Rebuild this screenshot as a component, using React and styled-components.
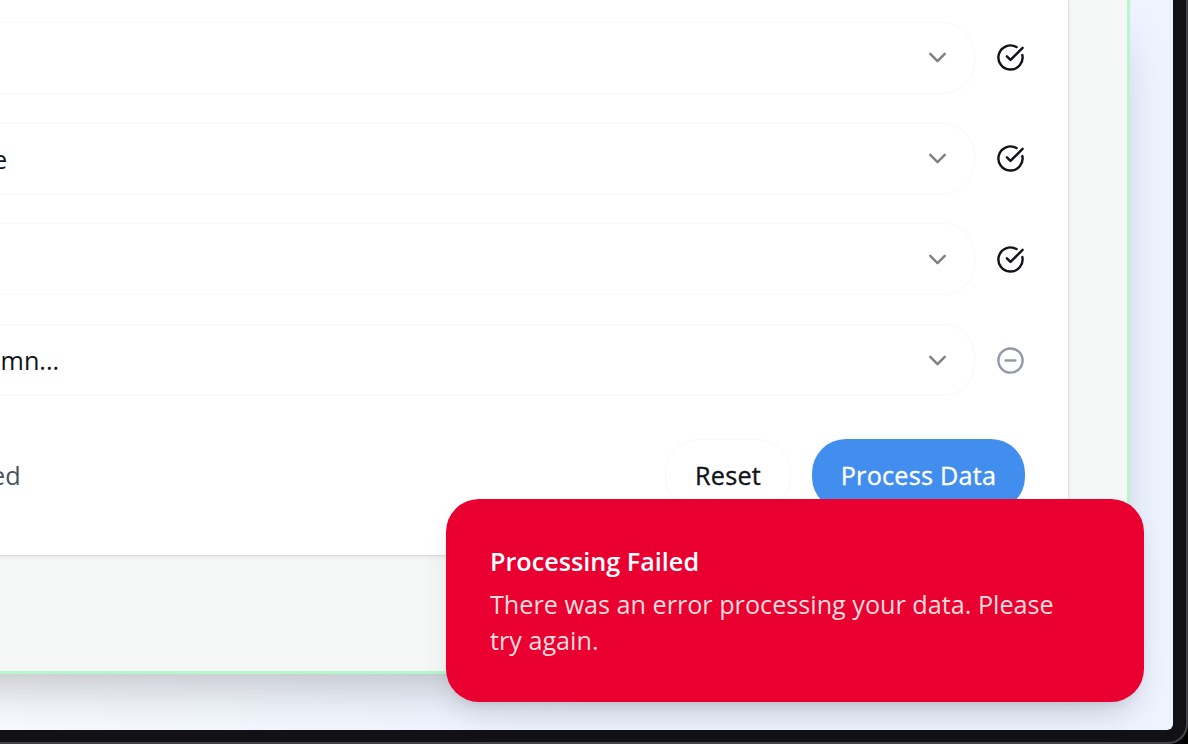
import React from 'react';
import styled, { createGlobalStyle } from 'styled-components';

const GlobalStyle = createGlobalStyle`
  * { box-sizing: border-box; }
  html, body { margin: 0; background: #000; overflow: hidden; }
  body { font-family: "Open Sans", "Noto Sans", sans-serif; font-size: 25.2px; color: #10131a; }
`;

const Viewport = styled.div`
  position: relative;
  width: 1188px;
  height: 744px;
  overflow: hidden;
  background: #000;
`;

const Device = styled.div`
  width: 1188px;
  height: 744px;
  padding: 0 13px 12px 0;
  background: #121116;
  border-right: 2px solid #444345;
  border-bottom: 2px solid #444345;
  border-bottom-right-radius: 20px;
`;

const Screen = styled.div`
  width: 1173px;
  height: 730px;
  padding: 0 43px 56px 0;
  overflow: hidden;
  background: linear-gradient(90deg, #f8fbff 0%, #edf3ff 50%);
  border-bottom-right-radius: 6px;
`;

const Panel = styled.div`
  width: 1330px;
  height: 674px;
  margin-left: -200px;
  padding: 0 59px 0 0;
  background: #f5f7f6;
  border-right: 3px solid #b6f6ca;
  border-bottom: 3px solid #b6f6ca;
  box-shadow: 0 27px 48px -17px rgba(0, 0, 0, 0.25);
`;

const Card = styled.div`
  height: 555px;
  padding: 21.7px 43px 0 200px;
  background: #fff;
  box-shadow: 0 0 0 1px rgba(0, 0, 0, 0.06), 0 2px 5px rgba(0, 0, 0, 0.07);
`;

const Fields = styled.div`
  display: flex;
  flex-direction: column;
  gap: 28.87px;
`;

const FieldRow = styled.div`
  display: flex;
  align-items: center;
  justify-content: space-between;
  height: 72px;
  padding-right: 0.5px;
`;

const Select = styled.div`
  display: flex;
  align-items: center;
  justify-content: space-between;
  width: 975px;
  height: 72px;
  padding-right: 22px;
  border: 1px solid #f7f8f8;
  border-left: 0;
  border-radius: 0 32px 32px 0;
`;

const Value = styled.span`
  margin-left: ${(p) => p.$shift}px;
  padding-top: 0.4px;
  white-space: nowrap;
`;

const Icon = styled.svg`
  width: 29px;
  height: 29px;
  flex: none;
  fill: none;
  stroke: ${(p) => p.$color};
  stroke-width: 2;
  stroke-linecap: round;
  stroke-linejoin: round;
`;

const Footer = styled.div`
  display: flex;
  align-items: center;
  height: 72px;
  margin-top: 42.7px;
`;

const Status = styled.span`
  flex: 1;
  margin-left: -9px;
  color: #4a5261;
`;

const Button = styled.button`
  height: 72px;
  width: ${(p) => p.$width}px;
  margin-left: ${(p) => (p.$primary ? 21 : 0)}px;
  padding: 1px 0 0;
  border: ${(p) => (p.$primary ? '0' : '1px solid #f7f8f8')};
  border-radius: 34px;
  background: ${(p) => (p.$primary ? '#428eee' : '#fff')};
  color: ${(p) => (p.$primary ? '#fff' : '#10131a')};
  font: 500 25.2px "Open Sans", "Noto Sans", sans-serif;
  letter-spacing: 0.25px;
  -webkit-text-stroke: 0.35px currentColor;
  white-space: nowrap;
`;

const Toast = styled.div`
  position: absolute;
  left: 446px;
  top: 499px;
  width: 698px;
  height: 203px;
  padding: 44px 44px;
  border-radius: 33px;
  background: #e90030;
  color: #fff;
  box-shadow: 0 18px 28px -5px rgba(0, 0, 0, 0.1), 0 7px 11px -7px rgba(0, 0, 0, 0.1);
`;

const ToastTitle = styled.div`
  font-weight: 600;
  line-height: 36px;
`;

const ToastText = styled.div`
  width: 600px;
  margin-top: 7px;
  line-height: 36px;
  color: #ffdcdc;
`;

const Chevron = () => (
  <Icon viewBox="0 0 24 24" $color="#7f8082">
    <path d="m6 9 6 6 6-6" />
  </Icon>
);

const CheckIcon = () => (
  <Icon viewBox="0 0 24 24" $color="#10131a">
    <path d="M21.801 10A10 10 0 1 1 17 3.335" />
    <path d="m9 11 3 3L22 4" />
  </Icon>
);

const MinusIcon = () => (
  <Icon viewBox="0 0 24 24" $color="#9299a8">
    <circle cx="12" cy="12" r="10" />
    <path d="M8 12h8" />
  </Icon>
);

const fields = [
  { value: '', shift: 0, mapped: true },
  { value: 'e', shift: -7, mapped: true },
  { value: '', shift: 0, mapped: true },
  { value: 'mn...', shift: 0.6, mapped: false },
];

export default function App() {
  return (
    <Viewport>
      <GlobalStyle />
      <Device>
        <Screen>
          <Panel>
            <Card>
              <Fields>
                {fields.map((field, i) => (
                  <FieldRow key={i}>
                    <Select>
                      <Value $shift={field.shift}>{field.value}</Value>
                      <Chevron />
                    </Select>
                    {field.mapped ? <CheckIcon /> : <MinusIcon />}
                  </FieldRow>
                ))}
              </Fields>
              <Footer>
                <Status>ed</Status>
                <Button $width={126}>Reset</Button>
                <Button $primary $width={213}>Process Data</Button>
              </Footer>
            </Card>
          </Panel>
        </Screen>
      </Device>
      <Toast>
        <ToastTitle>Processing Failed</ToastTitle>
        <ToastText>There was an error processing your data. Please try again.</ToastText>
      </Toast>
    </Viewport>
  );
}
